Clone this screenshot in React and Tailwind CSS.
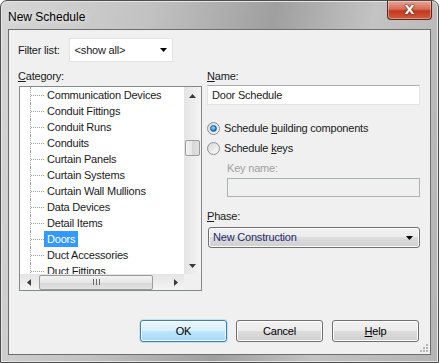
import React from 'react';

const items = [
  'Communication Devices',
  'Conduit Fittings',
  'Conduit Runs',
  'Conduits',
  'Curtain Panels',
  'Curtain Systems',
  'Curtain Wall Mullions',
  'Data Devices',
  'Detail Items',
  'Doors',
  'Duct Accessories',
  'Duct Fittings',
];

function Arrow({ dir, color = '#2b2b2b' }) {
  const pts = {
    up: '0,4 3.5,0 7,4',
    down: '0,0 7,0 3.5,4',
    left: '4,0 4,7 0,3.5',
    right: '0,0 0,7 4,3.5',
  }[dir];
  const vertical = dir === 'up' || dir === 'down';
  return (
    <svg width={vertical ? 7 : 4} height={vertical ? 4 : 7} viewBox={vertical ? '0 0 7 4' : '0 0 4 7'}>
      <polygon points={pts} fill={color} />
    </svg>
  );
}

function Radio({ checked }) {
  return (
    <div className="w-[13px] h-[13px] rounded-full border border-[#8e8f8f] bg-gradient-to-br from-[#d8d8d8] to-[#fbfbfb] flex items-center justify-center">
      {checked && (
        <div className="w-[7px] h-[7px] rounded-full bg-[radial-gradient(circle_at_40%_35%,#a6dcff,#2a8bd8_55%,#0b4f9a)] border border-[#1c5f9c]" />
      )}
    </div>
  );
}

function Button({ children, primary }) {
  return (
    <button
      className={
        'w-[87px] h-[22px] rounded-[3px] border text-[11px] tracking-[-0.2px] text-black flex items-center justify-center ' +
        (primary
          ? 'border-[#3c7fb1] bg-[linear-gradient(#eaf6fd_0%,#d9f0fc_50%,#bee6fd_50%,#a7d9f5_100%)] shadow-[0_0_0_1px_#bfe3f7,inset_0_0_0_1px_#fcfcfc]'
          : 'border-[#707070] bg-[linear-gradient(#f2f2f2_0%,#ebebeb_50%,#dddddd_50%,#cfcfcf_100%)] shadow-[inset_0_0_0_1px_#fcfcfc]')
      }
    >
      {children}
    </button>
  );
}

export default function App() {
  return (
    <div
      className="w-[439px] h-[363px] overflow-hidden rounded-t-[7px] border border-[#4e4e4e] bg-[linear-gradient(100deg,#d6d6d6_0%,#c2c2c2_30%,#9f9f9f_55%,#c3c3c3_75%,#b4b4b4_100%)] flex flex-col text-[#1a1a1a] shadow-[inset_0_0_0_1px_#e6e6e6]"
      style={{ fontFamily: '"Liberation Sans", Arial, sans-serif' }}
    >
      {/* Title bar */}
      <div className="h-[28px] flex items-start justify-between">
        <div className="pl-[7px] pt-[7px] text-[12px] text-black [text-shadow:0_0_6px_#ffffff]">New Schedule</div>
        <div className="mr-[6px] w-[45px] h-[19px] rounded-b-[4px] border border-t-0 border-[#5a2a22] bg-[linear-gradient(#e8a493_0%,#d66d56_45%,#c1391f_55%,#d35a3c_100%)] flex items-center justify-center shadow-[inset_0_0_0_1px_rgba(255,255,255,0.35)]">
          <span className="text-[13px] font-bold text-white [text-shadow:0_0_2px_#4a1208,0_0_1px_#4a1208]" style={{ fontFamily: '"DejaVu Sans", sans-serif' }}>
            X
          </span>
        </div>
      </div>

      {/* Client area */}
      <div className="relative mx-[7px] h-[326px] border border-[#6e6e6e] bg-[#f0f0f0] flex flex-col text-[11px] tracking-[-0.2px]">
        {/* Filter row */}
        <div className="flex items-center mt-[8px] ml-[9px]">
          <span>Filter list:</span>
          <div className="ml-[9px] w-[104px] h-[24px] bg-white border border-[#e3e3e3] flex items-center justify-between pl-[5px] pr-[5px]">
            <span>&lt;show all&gt;</span>
            <Arrow dir="down" color="#000" />
          </div>
        </div>

        <div className="flex mt-[7px]">
          {/* Left column */}
          <div className="ml-[9px] w-[184px]">
            <div className="h-[14px] leading-[14px]">
              <span className="underline underline-offset-1">C</span>ategory:
            </div>
            <div className="mt-[3px] ml-[1px] w-[183px] h-[205px] border border-[#828790] bg-white flex flex-col">
              <div className="flex h-[187px]">
                <div className="flex-1 overflow-hidden">
                  {items.map((it) => (
                    <div key={it} className="h-[16px] flex items-center shrink-0">
                      <div className="ml-[10px] w-[14px] h-[16px] border-l border-dotted border-[#a0a0a0] flex items-center">
                        <div className="w-full border-t border-dotted border-[#a0a0a0]" />
                      </div>
                      <span
                        className={
                          'px-[3px] h-[16px] leading-[16px] whitespace-nowrap ' +
                          (it === 'Doors' ? 'bg-[#3399ff] text-white' : 'text-[#1a1a1a]')
                        }
                      >
                        {it}
                      </span>
                    </div>
                  ))}
                </div>
                {/* vertical scrollbar */}
                <div className="w-[17px] bg-[linear-gradient(90deg,#e4e4e4,#f4f4f4)] flex flex-col items-center">
                  <div className="h-[17px] flex items-center justify-center">
                    <Arrow dir="up" color="#3a3a3a" />
                  </div>
                  <div className="mt-[36px] w-[15px] h-[16px] rounded-[2px] border border-[#9b9b9b] bg-[linear-gradient(90deg,#f3f3f3,#e6e6e6_50%,#d6d6d6_50%,#e2e2e2)]" />
                  <div className="mt-auto h-[17px] flex items-center justify-center">
                    <Arrow dir="down" color="#3a3a3a" />
                  </div>
                </div>
              </div>
              {/* horizontal scrollbar */}
              <div className="flex h-[16px]">
                <div className="flex-1 flex items-center bg-[linear-gradient(#e4e4e4,#f4f4f4)]">
                  <div className="w-[17px] flex justify-center">
                    <Arrow dir="left" color="#3a3a3a" />
                  </div>
                  <div className="ml-[2px] w-[114px] h-[15px] rounded-[2px] border border-[#9b9b9b] bg-[linear-gradient(#f3f3f3,#e6e6e6_50%,#d6d6d6_50%,#e2e2e2)] flex items-center justify-center">
                    <div className="flex gap-[2px]">
                      <div className="w-px h-[6px] bg-[#6a6a6a]" />
                      <div className="w-px h-[6px] bg-[#6a6a6a]" />
                      <div className="w-px h-[6px] bg-[#6a6a6a]" />
                    </div>
                  </div>
                  <div className="ml-auto w-[17px] flex justify-center">
                    <Arrow dir="right" color="#3a3a3a" />
                  </div>
                </div>
                <div className="w-[17px] bg-[#f0f0f0]" />
              </div>
            </div>
          </div>

          {/* Right column */}
          <div className="ml-[5px] w-[213px]">
            <div className="h-[14px] leading-[14px]">
              <span className="underline underline-offset-1">N</span>ame:
            </div>
            <div className="mt-[2px] h-[20px] bg-white border border-[#e3e3e3] border-t-[#abadb3] flex items-center pl-[4px]">
              Door Schedule
            </div>

            <div className="mt-[15px] h-[16px] flex items-center gap-[4px]">
              <Radio checked />
              <span>
                Schedule <span className="underline underline-offset-1">b</span>uilding components
              </span>
            </div>
            <div className="mt-[4px] h-[16px] flex items-center gap-[4px]">
              <Radio />
              <span>
                Schedule <span className="underline underline-offset-1">k</span>eys
              </span>
            </div>

            <div className="ml-[20px] mt-[5px] h-[14px] leading-[14px] text-[#a0a0a0]">Key name:</div>
            <div className="ml-[20px] mt-[3px] h-[19px] border border-[#adb2b5] bg-[#f0f0f0]" />

            <div className="mt-[12px] h-[14px] leading-[14px]">
              <span className="underline underline-offset-1">P</span>hase:
            </div>
            <div className="mt-[4px] ml-[1px] h-[21px] rounded-[3px] border border-[#707070] bg-[linear-gradient(#f2f2f2_0%,#ebebeb_50%,#dddddd_50%,#cfcfcf_100%)] shadow-[inset_0_0_0_1px_#fcfcfc] flex items-center justify-between pl-[4px] pr-[6px]">
              <span className="text-[#1b2a6b]">New Construction</span>
              <Arrow dir="down" color="#000" />
            </div>
          </div>
        </div>

        {/* Buttons */}
        <div className="mt-auto mb-[12px] mr-[11px] flex justify-end gap-[9px]">
          <Button primary>OK</Button>
          <Button>Cancel</Button>
          <Button>
            <span>
              <span className="underline underline-offset-1">H</span>elp
            </span>
          </Button>
        </div>

        {/* size grip */}
        <div className="absolute right-[2px] bottom-[2px] grid grid-cols-3 gap-[1px]">
          {[0, 0, 1, 0, 1, 1, 1, 1, 1].map((v, i) => (
            <div key={i} className={'w-[2px] h-[2px] ' + (v ? 'bg-[#b5b5b5]' : 'bg-transparent')} />
          ))}
        </div>
      </div>
    </div>
  );
}
